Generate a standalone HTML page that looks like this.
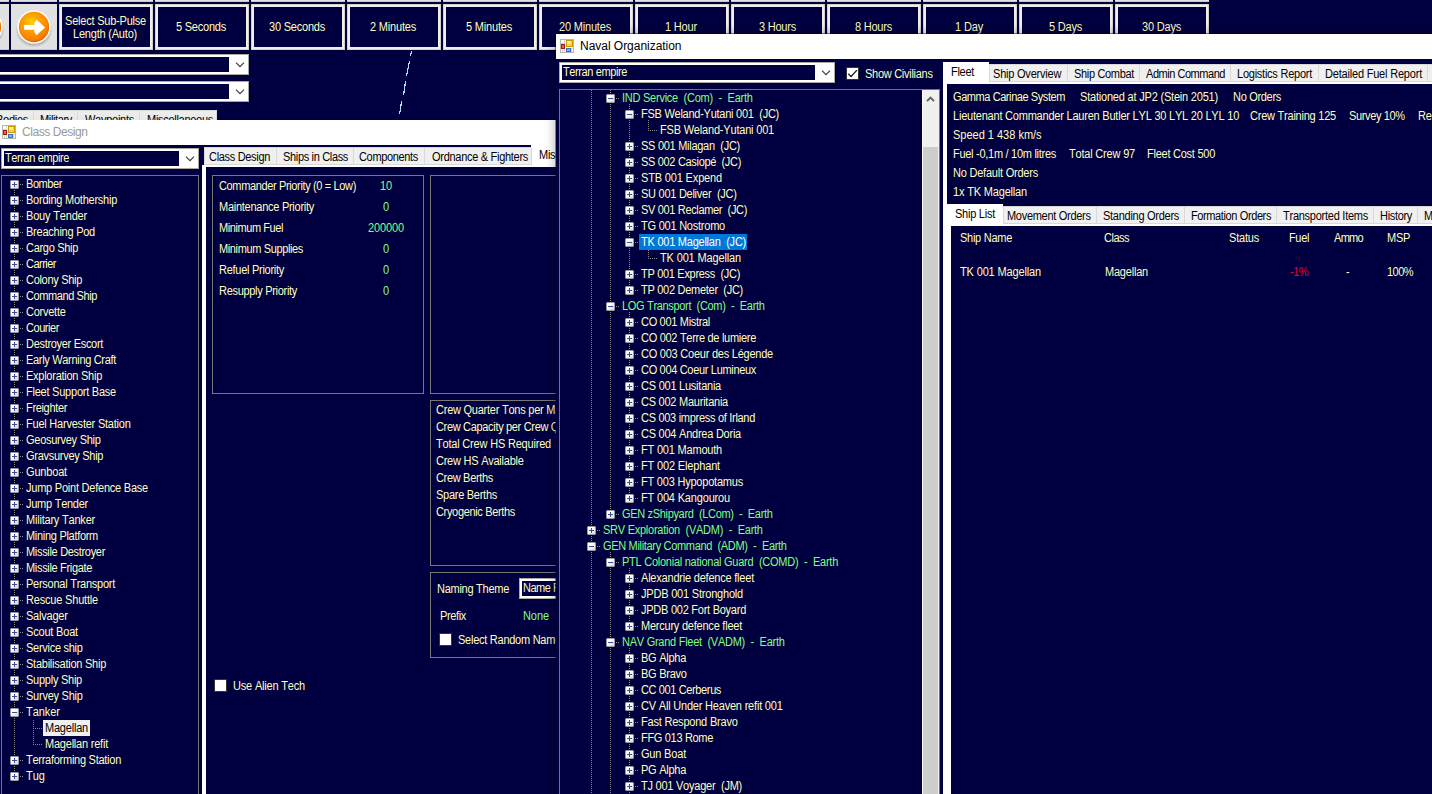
<!DOCTYPE html>
<html lang="en"><head><meta charset="utf-8"><title>Aurora</title><style>
html,body{margin:0;padding:0}
body{width:1432px;height:794px;overflow:hidden;background:#000040;position:relative;font-family:"Liberation Sans",sans-serif;font-size:12px;font-kerning:none}
div,svg.abs,span.t{position:absolute;box-sizing:border-box}
.t{white-space:pre;line-height:16px;height:16px;transform:scaleX(.9167);transform-origin:0 0}
.ttl{transform:none}
.win{overflow:hidden;background:#000040}
.nav{border-left:1px solid rgba(0,0,0,.4);border-top:1px solid rgba(0,0,0,.4);background-clip:padding-box;box-shadow:0 0 10px rgba(0,0,0,.3)}
.gbtn{background:#E1E1E1;border-bottom:1px solid #c9c9c4}
.tbtn{border:3px solid #EFEFEA;outline:1px solid #D2D2CB;outline-offset:-1px;background:#000040}
.combo{background:#fff;border:1px solid #A9A9A0}
.tabstrip{background:#F0F0F0;border:1px solid #D9D9D9}
.mts{background:linear-gradient(#EDEDED,#E2E2E2)}
.tree{border:1px solid #747470}
.grp{border:1px solid #787874}
.eb{background:linear-gradient(135deg,#fff 30%,#D8D8D4);border:1px solid #9A9A9A;border-radius:1px}
.eb:before{content:"";position:absolute;left:1px;top:3px;width:5px;height:1px;background:#3A4BA0}
.eb.p:after{content:"";position:absolute;left:3px;top:1px;width:1px;height:5px;background:#3A4BA0}
.vd{background-image:linear-gradient(#8a8a8a 50%,transparent 50%);background-size:1px 2px}
.hd{background-image:linear-gradient(90deg,#8a8a8a 50%,transparent 50%);background-size:2px 1px}
.cb{background:#fff;border:1px solid #333}
</style></head>
<body>
<div class="gbtn" style="left:-40px;top:-44px;width:49px;height:46px;"></div>
<div class="gbtn" style="left:11px;top:-44px;width:46px;height:46px;"></div>
<div class="gbtn" style="left:59px;top:-44px;width:94px;height:46px;"></div>
<div class="gbtn" style="left:155px;top:-44px;width:94px;height:46px;"></div>
<div class="gbtn" style="left:251px;top:-44px;width:94px;height:46px;"></div>
<div class="gbtn" style="left:347px;top:-44px;width:94px;height:46px;"></div>
<div class="gbtn" style="left:443px;top:-44px;width:94px;height:46px;"></div>
<div class="gbtn" style="left:539px;top:-44px;width:94px;height:46px;"></div>
<div class="gbtn" style="left:635px;top:-44px;width:94px;height:46px;"></div>
<div class="gbtn" style="left:731px;top:-44px;width:94px;height:46px;"></div>
<div class="gbtn" style="left:827px;top:-44px;width:94px;height:46px;"></div>
<div class="gbtn" style="left:923px;top:-44px;width:94px;height:46px;"></div>
<div class="gbtn" style="left:1019px;top:-44px;width:94px;height:46px;"></div>
<div class="gbtn" style="left:1115px;top:-44px;width:94px;height:46px;"></div>
<div class="gbtn" style="left:-40px;top:4px;width:49px;height:46px;"></div>
<div class="gbtn" style="left:11px;top:4px;width:46px;height:46px;"></div>
<svg class="abs" style="left:11px;top:4px" width="46" height="46" viewBox="0 0 46 46" ><defs><radialGradient id="og" cx="0.42" cy="0.36" r="0.66"><stop offset="0" stop-color="#FFD400"/><stop offset="0.4" stop-color="#FFA200"/><stop offset="0.85" stop-color="#F77F00"/><stop offset="1" stop-color="#E36400"/></radialGradient><radialGradient id="sh" cx="0.5" cy="0.5" r="0.5"><stop offset="0.75" stop-color="#000" stop-opacity="0.28"/><stop offset="1" stop-color="#000" stop-opacity="0"/></radialGradient></defs><ellipse cx="23" cy="26" rx="18.5" ry="17.5" fill="url(#sh)"/><circle cx="23" cy="23" r="16.7" fill="#fff"/><circle cx="23" cy="23" r="15.2" fill="url(#og)"/><path d="M13 21h10.4v-2.3l2-3.2 8.8 7.9-8.8 7.9-2-3.2v-2.3H13z" fill="#fff"/></svg>
<svg class="abs" style="left:-37px;top:4px" width="46" height="46" viewBox="0 0 46 46" ><ellipse cx="23" cy="26" rx="18.5" ry="17.5" fill="url(#sh)"/><circle cx="23" cy="23" r="16.7" fill="#fff"/><circle cx="23" cy="23" r="15.2" fill="url(#og)"/></svg>
<div class="tbtn" style="left:59px;top:4px;width:94px;height:46px;"></div>
<span class="t" style="left:64.5px;top:12.7px;color:#FFFFC0;letter-spacing:-0.231px;">Select Sub-Pulse</span>
<span class="t" style="left:73px;top:25.7px;color:#FFFFC0;letter-spacing:-0.223px;">Length (Auto)</span>
<div class="tbtn" style="left:155px;top:4px;width:94px;height:46px;"></div>
<span class="t" style="left:176px;top:18.7px;color:#FFFFC0;letter-spacing:-0.241px;">5 Seconds</span>
<div class="tbtn" style="left:251px;top:4px;width:94px;height:46px;"></div>
<span class="t" style="left:269px;top:18.7px;color:#FFFFC0;letter-spacing:-0.230px;">30 Seconds</span>
<div class="tbtn" style="left:347px;top:4px;width:94px;height:46px;"></div>
<span class="t" style="left:370px;top:18.7px;color:#FFFFC0;letter-spacing:-0.205px;">2 Minutes</span>
<div class="tbtn" style="left:443px;top:4px;width:94px;height:46px;"></div>
<span class="t" style="left:466px;top:18.7px;color:#FFFFC0;letter-spacing:-0.205px;">5 Minutes</span>
<div class="tbtn" style="left:539px;top:4px;width:94px;height:46px;"></div>
<span class="t" style="left:559px;top:18.7px;color:#FFFFC0;letter-spacing:-0.198px;">20 Minutes</span>
<div class="tbtn" style="left:635px;top:4px;width:94px;height:46px;"></div>
<span class="t" style="left:665px;top:18.7px;color:#FFFFC0;letter-spacing:-0.187px;">1 Hour</span>
<div class="tbtn" style="left:731px;top:4px;width:94px;height:46px;"></div>
<span class="t" style="left:758.5px;top:18.7px;color:#FFFFC0;letter-spacing:-0.238px;">3 Hours</span>
<div class="tbtn" style="left:827px;top:4px;width:94px;height:46px;"></div>
<span class="t" style="left:854.5px;top:18.7px;color:#FFFFC0;letter-spacing:-0.238px;">8 Hours</span>
<div class="tbtn" style="left:923px;top:4px;width:94px;height:46px;"></div>
<span class="t" style="left:955px;top:18.7px;color:#FFFFC0;letter-spacing:-0.163px;">1 Day</span>
<div class="tbtn" style="left:1019px;top:4px;width:94px;height:46px;"></div>
<span class="t" style="left:1048.5px;top:18.7px;color:#FFFFC0;letter-spacing:-0.227px;">5 Days</span>
<div class="tbtn" style="left:1115px;top:4px;width:94px;height:46px;"></div>
<span class="t" style="left:1141.5px;top:18.7px;color:#FFFFC0;letter-spacing:-0.212px;">30 Days</span>
<div class="combo" style="left:-60px;top:54px;width:309px;height:21px;"></div>
<div style="left:-57px;top:57px;width:286px;height:15px;background:#000040"></div>
<svg class="abs" style="left:235px;top:62.4px" width="10" height="6" viewBox="0 0 10 6" ><path d="M1 0.6L5 4.6L9 0.6" fill="none" stroke="#3c3c3c" stroke-width="1.15"/></svg>
<div class="combo" style="left:-60px;top:81px;width:309px;height:21px;"></div>
<div style="left:-57px;top:84px;width:286px;height:15px;background:#000040"></div>
<svg class="abs" style="left:235px;top:89.4px" width="10" height="6" viewBox="0 0 10 6" ><path d="M1 0.6L5 4.6L9 0.6" fill="none" stroke="#3c3c3c" stroke-width="1.15"/></svg>
<svg class="abs" style="left:395px;top:50px" width="20" height="68" viewBox="395 50 20 68" shape-rendering="crispEdges"><g stroke="#B0DCF5" stroke-width="1.2" fill="none"><path d="M411.6 51L410.4 55.6"/><path d="M409.6 61L406.6 75.8"/><path d="M405.6 81.2L403.6 94.8"/><path d="M401.6 101L399.6 114.5"/></g></svg>
<div class="tabstrip mts" style="left:-30px;top:110px;width:247px;height:22px;"></div>
<div style="left:33px;top:111px;width:1px;height:20px;background:#D9D9D9"></div>
<div style="left:77px;top:111px;width:1px;height:20px;background:#D9D9D9"></div>
<div style="left:139px;top:111px;width:1px;height:20px;background:#D9D9D9"></div>
<span class="t" style="left:-4px;top:111.7px;color:#000;letter-spacing:-0.299px;">Bodies</span>
<span class="t" style="left:40.4px;top:111.7px;color:#000;letter-spacing:-0.386px;">Military</span>
<span class="t" style="left:84.5px;top:111.7px;color:#000;letter-spacing:-0.286px;">Waypoints</span>
<span class="t" style="left:146.5px;top:111.7px;color:#000;letter-spacing:-0.311px;">Miscellaneous</span>
<div class="win" style="left:0;top:120px;width:556px;height:674px">
<div style="left:0px;top:0px;width:556px;height:25px;background:#fff"></div>
<svg class="abs" style="left:2px;top:5px" width="14" height="14" viewBox="0 0 14 14" ><rect x="0.5" y="0.5" width="13" height="13" fill="#fff" stroke="#b4b4b4"/><path d="M4.5 1v12M2.5 10v3M11.5 9v4M1 9.5h3.5M1 4.5h3.5M11 9.5h2" stroke="#d4d4d4" fill="none"/><rect x="1" y="5" width="4" height="5" fill="#a81c10"/><rect x="2" y="6" width="2" height="3" fill="#e0604f"/><rect x="6" y="1" width="7" height="7" fill="#c89a00"/><rect x="7" y="2" width="5" height="5" fill="#ffd23c"/><rect x="7" y="2" width="4" height="3" fill="#ffe88c"/><rect x="6" y="9" width="5" height="4" fill="#3a6fd0"/><rect x="7" y="10" width="3" height="2" fill="#7fb0f5"/></svg>
<span class="t ttl" style="left:22px;top:3.7px;color:#9a9a9a;letter-spacing:-0.434px;">Class Design</span>
<div class="combo" style="left:1px;top:28px;width:198px;height:21px;"></div>
<div style="left:4px;top:31px;width:175px;height:15px;background:#000040"></div>
<svg class="abs" style="left:185px;top:36.4px" width="10" height="6" viewBox="0 0 10 6" ><path d="M1 0.6L5 4.6L9 0.6" fill="none" stroke="#3c3c3c" stroke-width="1.15"/></svg>
<span class="t" style="left:5.2px;top:29.7px;color:#FFFFC0;letter-spacing:-0.426px;">Terran empire</span>
<div class="tree" style="left:1px;top:55px;width:198px;height:640px;"></div>
<div class="vd" style="left:14px;top:69px;width:1px;height:583px;background-position:0 1px"></div>
<div style="left:20px;top:64px;width:1px;height:1px;background:#8a8a8a"></div>
<div style="left:22px;top:64px;width:1px;height:1px;background:#8a8a8a"></div>
<div class="eb p" style="left:10px;top:60px;width:9px;height:9px;"></div>
<span class="t" style="left:26px;top:55.7px;color:#FFFFC0;letter-spacing:-0.460px;">Bomber</span>
<div style="left:20px;top:80px;width:1px;height:1px;background:#8a8a8a"></div>
<div style="left:22px;top:80px;width:1px;height:1px;background:#8a8a8a"></div>
<div class="eb p" style="left:10px;top:76px;width:9px;height:9px;"></div>
<span class="t" style="left:26px;top:71.7px;color:#FFFFC0;letter-spacing:-0.266px;">Bording Mothership</span>
<div style="left:20px;top:96px;width:1px;height:1px;background:#8a8a8a"></div>
<div style="left:22px;top:96px;width:1px;height:1px;background:#8a8a8a"></div>
<div class="eb p" style="left:10px;top:92px;width:9px;height:9px;"></div>
<span class="t" style="left:26px;top:87.7px;color:#FFFFC0;letter-spacing:-0.198px;">Bouy Tender</span>
<div style="left:20px;top:112px;width:1px;height:1px;background:#8a8a8a"></div>
<div style="left:22px;top:112px;width:1px;height:1px;background:#8a8a8a"></div>
<div class="eb p" style="left:10px;top:108px;width:9px;height:9px;"></div>
<span class="t" style="left:26px;top:103.7px;color:#FFFFC0;letter-spacing:-0.266px;">Breaching Pod</span>
<div style="left:20px;top:128px;width:1px;height:1px;background:#8a8a8a"></div>
<div style="left:22px;top:128px;width:1px;height:1px;background:#8a8a8a"></div>
<div class="eb p" style="left:10px;top:124px;width:9px;height:9px;"></div>
<span class="t" style="left:26px;top:119.7px;color:#FFFFC0;letter-spacing:-0.332px;">Cargo Ship</span>
<div style="left:20px;top:144px;width:1px;height:1px;background:#8a8a8a"></div>
<div style="left:22px;top:144px;width:1px;height:1px;background:#8a8a8a"></div>
<div class="eb p" style="left:10px;top:140px;width:9px;height:9px;"></div>
<span class="t" style="left:26px;top:135.7px;color:#FFFFC0;letter-spacing:-0.564px;">Carrier</span>
<div style="left:20px;top:160px;width:1px;height:1px;background:#8a8a8a"></div>
<div style="left:22px;top:160px;width:1px;height:1px;background:#8a8a8a"></div>
<div class="eb p" style="left:10px;top:156px;width:9px;height:9px;"></div>
<span class="t" style="left:26px;top:151.7px;color:#FFFFC0;letter-spacing:-0.330px;">Colony Ship</span>
<div style="left:20px;top:176px;width:1px;height:1px;background:#8a8a8a"></div>
<div style="left:22px;top:176px;width:1px;height:1px;background:#8a8a8a"></div>
<div class="eb p" style="left:10px;top:172px;width:9px;height:9px;"></div>
<span class="t" style="left:26px;top:167.7px;color:#FFFFC0;letter-spacing:-0.439px;">Command Ship</span>
<div style="left:20px;top:192px;width:1px;height:1px;background:#8a8a8a"></div>
<div style="left:22px;top:192px;width:1px;height:1px;background:#8a8a8a"></div>
<div class="eb p" style="left:10px;top:188px;width:9px;height:9px;"></div>
<span class="t" style="left:26px;top:183.7px;color:#FFFFC0;letter-spacing:-0.270px;">Corvette</span>
<div style="left:20px;top:208px;width:1px;height:1px;background:#8a8a8a"></div>
<div style="left:22px;top:208px;width:1px;height:1px;background:#8a8a8a"></div>
<div class="eb p" style="left:10px;top:204px;width:9px;height:9px;"></div>
<span class="t" style="left:26px;top:199.7px;color:#FFFFC0;letter-spacing:-0.480px;">Courier</span>
<div style="left:20px;top:224px;width:1px;height:1px;background:#8a8a8a"></div>
<div style="left:22px;top:224px;width:1px;height:1px;background:#8a8a8a"></div>
<div class="eb p" style="left:10px;top:220px;width:9px;height:9px;"></div>
<span class="t" style="left:26px;top:215.7px;color:#FFFFC0;letter-spacing:-0.335px;">Destroyer Escort</span>
<div style="left:20px;top:240px;width:1px;height:1px;background:#8a8a8a"></div>
<div style="left:22px;top:240px;width:1px;height:1px;background:#8a8a8a"></div>
<div class="eb p" style="left:10px;top:236px;width:9px;height:9px;"></div>
<span class="t" style="left:26px;top:231.7px;color:#FFFFC0;letter-spacing:-0.343px;">Early Warning Craft</span>
<div style="left:20px;top:256px;width:1px;height:1px;background:#8a8a8a"></div>
<div style="left:22px;top:256px;width:1px;height:1px;background:#8a8a8a"></div>
<div class="eb p" style="left:10px;top:252px;width:9px;height:9px;"></div>
<span class="t" style="left:26px;top:247.7px;color:#FFFFC0;letter-spacing:-0.280px;">Exploration Ship</span>
<div style="left:20px;top:272px;width:1px;height:1px;background:#8a8a8a"></div>
<div style="left:22px;top:272px;width:1px;height:1px;background:#8a8a8a"></div>
<div class="eb p" style="left:10px;top:268px;width:9px;height:9px;"></div>
<span class="t" style="left:26px;top:263.7px;color:#FFFFC0;letter-spacing:-0.253px;">Fleet Support Base</span>
<div style="left:20px;top:288px;width:1px;height:1px;background:#8a8a8a"></div>
<div style="left:22px;top:288px;width:1px;height:1px;background:#8a8a8a"></div>
<div class="eb p" style="left:10px;top:284px;width:9px;height:9px;"></div>
<span class="t" style="left:26px;top:279.7px;color:#FFFFC0;letter-spacing:-0.367px;">Freighter</span>
<div style="left:20px;top:304px;width:1px;height:1px;background:#8a8a8a"></div>
<div style="left:22px;top:304px;width:1px;height:1px;background:#8a8a8a"></div>
<div class="eb p" style="left:10px;top:300px;width:9px;height:9px;"></div>
<span class="t" style="left:26px;top:295.7px;color:#FFFFC0;letter-spacing:-0.240px;">Fuel Harvester Station</span>
<div style="left:20px;top:320px;width:1px;height:1px;background:#8a8a8a"></div>
<div style="left:22px;top:320px;width:1px;height:1px;background:#8a8a8a"></div>
<div class="eb p" style="left:10px;top:316px;width:9px;height:9px;"></div>
<span class="t" style="left:26px;top:311.7px;color:#FFFFC0;letter-spacing:-0.286px;">Geosurvey Ship</span>
<div style="left:20px;top:336px;width:1px;height:1px;background:#8a8a8a"></div>
<div style="left:22px;top:336px;width:1px;height:1px;background:#8a8a8a"></div>
<div class="eb p" style="left:10px;top:332px;width:9px;height:9px;"></div>
<span class="t" style="left:26px;top:327.7px;color:#FFFFC0;letter-spacing:-0.299px;">Gravsurvey Ship</span>
<div style="left:20px;top:352px;width:1px;height:1px;background:#8a8a8a"></div>
<div style="left:22px;top:352px;width:1px;height:1px;background:#8a8a8a"></div>
<div class="eb p" style="left:10px;top:348px;width:9px;height:9px;"></div>
<span class="t" style="left:26px;top:343.7px;color:#FFFFC0;letter-spacing:-0.189px;">Gunboat</span>
<div style="left:20px;top:368px;width:1px;height:1px;background:#8a8a8a"></div>
<div style="left:22px;top:368px;width:1px;height:1px;background:#8a8a8a"></div>
<div class="eb p" style="left:10px;top:364px;width:9px;height:9px;"></div>
<span class="t" style="left:26px;top:359.7px;color:#FFFFC0;letter-spacing:-0.246px;">Jump Point Defence Base</span>
<div style="left:20px;top:384px;width:1px;height:1px;background:#8a8a8a"></div>
<div style="left:22px;top:384px;width:1px;height:1px;background:#8a8a8a"></div>
<div class="eb p" style="left:10px;top:380px;width:9px;height:9px;"></div>
<span class="t" style="left:26px;top:375.7px;color:#FFFFC0;letter-spacing:-0.279px;">Jump Tender</span>
<div style="left:20px;top:400px;width:1px;height:1px;background:#8a8a8a"></div>
<div style="left:22px;top:400px;width:1px;height:1px;background:#8a8a8a"></div>
<div class="eb p" style="left:10px;top:396px;width:9px;height:9px;"></div>
<span class="t" style="left:26px;top:391.7px;color:#FFFFC0;letter-spacing:-0.228px;">Military Tanker</span>
<div style="left:20px;top:416px;width:1px;height:1px;background:#8a8a8a"></div>
<div style="left:22px;top:416px;width:1px;height:1px;background:#8a8a8a"></div>
<div class="eb p" style="left:10px;top:412px;width:9px;height:9px;"></div>
<span class="t" style="left:26px;top:407.7px;color:#FFFFC0;letter-spacing:-0.322px;">Mining Platform</span>
<div style="left:20px;top:432px;width:1px;height:1px;background:#8a8a8a"></div>
<div style="left:22px;top:432px;width:1px;height:1px;background:#8a8a8a"></div>
<div class="eb p" style="left:10px;top:428px;width:9px;height:9px;"></div>
<span class="t" style="left:26px;top:423.7px;color:#FFFFC0;letter-spacing:-0.343px;">Missile Destroyer</span>
<div style="left:20px;top:448px;width:1px;height:1px;background:#8a8a8a"></div>
<div style="left:22px;top:448px;width:1px;height:1px;background:#8a8a8a"></div>
<div class="eb p" style="left:10px;top:444px;width:9px;height:9px;"></div>
<span class="t" style="left:26px;top:439.7px;color:#FFFFC0;letter-spacing:-0.357px;">Missile Frigate</span>
<div style="left:20px;top:464px;width:1px;height:1px;background:#8a8a8a"></div>
<div style="left:22px;top:464px;width:1px;height:1px;background:#8a8a8a"></div>
<div class="eb p" style="left:10px;top:460px;width:9px;height:9px;"></div>
<span class="t" style="left:26px;top:455.7px;color:#FFFFC0;letter-spacing:-0.275px;">Personal Transport</span>
<div style="left:20px;top:480px;width:1px;height:1px;background:#8a8a8a"></div>
<div style="left:22px;top:480px;width:1px;height:1px;background:#8a8a8a"></div>
<div class="eb p" style="left:10px;top:476px;width:9px;height:9px;"></div>
<span class="t" style="left:26px;top:471.7px;color:#FFFFC0;letter-spacing:-0.203px;">Rescue Shuttle</span>
<div style="left:20px;top:496px;width:1px;height:1px;background:#8a8a8a"></div>
<div style="left:22px;top:496px;width:1px;height:1px;background:#8a8a8a"></div>
<div class="eb p" style="left:10px;top:492px;width:9px;height:9px;"></div>
<span class="t" style="left:26px;top:487.7px;color:#FFFFC0;letter-spacing:-0.249px;">Salvager</span>
<div style="left:20px;top:512px;width:1px;height:1px;background:#8a8a8a"></div>
<div style="left:22px;top:512px;width:1px;height:1px;background:#8a8a8a"></div>
<div class="eb p" style="left:10px;top:508px;width:9px;height:9px;"></div>
<span class="t" style="left:26px;top:503.7px;color:#FFFFC0;letter-spacing:-0.199px;">Scout Boat</span>
<div style="left:20px;top:528px;width:1px;height:1px;background:#8a8a8a"></div>
<div style="left:22px;top:528px;width:1px;height:1px;background:#8a8a8a"></div>
<div class="eb p" style="left:10px;top:524px;width:9px;height:9px;"></div>
<span class="t" style="left:26px;top:519.7px;color:#FFFFC0;letter-spacing:-0.302px;">Service ship</span>
<div style="left:20px;top:544px;width:1px;height:1px;background:#8a8a8a"></div>
<div style="left:22px;top:544px;width:1px;height:1px;background:#8a8a8a"></div>
<div class="eb p" style="left:10px;top:540px;width:9px;height:9px;"></div>
<span class="t" style="left:26px;top:535.7px;color:#FFFFC0;letter-spacing:-0.266px;">Stabilisation Ship</span>
<div style="left:20px;top:560px;width:1px;height:1px;background:#8a8a8a"></div>
<div style="left:22px;top:560px;width:1px;height:1px;background:#8a8a8a"></div>
<div class="eb p" style="left:10px;top:556px;width:9px;height:9px;"></div>
<span class="t" style="left:26px;top:551.7px;color:#FFFFC0;letter-spacing:-0.269px;">Supply Ship</span>
<div style="left:20px;top:576px;width:1px;height:1px;background:#8a8a8a"></div>
<div style="left:22px;top:576px;width:1px;height:1px;background:#8a8a8a"></div>
<div class="eb p" style="left:10px;top:572px;width:9px;height:9px;"></div>
<span class="t" style="left:26px;top:567.7px;color:#FFFFC0;letter-spacing:-0.269px;">Survey Ship</span>
<div style="left:20px;top:592px;width:1px;height:1px;background:#8a8a8a"></div>
<div style="left:22px;top:592px;width:1px;height:1px;background:#8a8a8a"></div>
<div class="eb" style="left:10px;top:588px;width:9px;height:9px;"></div>
<span class="t" style="left:26px;top:583.7px;color:#FFFFC0;letter-spacing:-0.045px;">Tanker</span>
<div class="hd" style="left:33px;top:608px;width:9px;height:1px;"></div>
<div style="left:43px;top:600px;width:47px;height:16px;background:#F0F0F0"></div>
<span class="t" style="left:45px;top:599.7px;color:#000;letter-spacing:-0.224px;">Magellan</span>
<div class="hd" style="left:33px;top:624px;width:9px;height:1px;"></div>
<span class="t" style="left:45px;top:615.7px;color:#FFFFC0;letter-spacing:-0.237px;">Magellan refit</span>
<div style="left:20px;top:640px;width:1px;height:1px;background:#8a8a8a"></div>
<div style="left:22px;top:640px;width:1px;height:1px;background:#8a8a8a"></div>
<div class="eb p" style="left:10px;top:636px;width:9px;height:9px;"></div>
<span class="t" style="left:26px;top:631.7px;color:#FFFFC0;letter-spacing:-0.288px;">Terraforming Station</span>
<div style="left:20px;top:656px;width:1px;height:1px;background:#8a8a8a"></div>
<div style="left:22px;top:656px;width:1px;height:1px;background:#8a8a8a"></div>
<div class="eb p" style="left:10px;top:652px;width:9px;height:9px;"></div>
<span class="t" style="left:26px;top:647.7px;color:#FFFFC0;letter-spacing:0.013px;">Tug</span>
<div class="vd" style="left:33px;top:600px;width:1px;height:25px;background-position:0 0px"></div>
<div class="tabstrip" style="left:204px;top:27px;width:330px;height:18px;"></div>
<div style="left:202px;top:45px;width:360px;height:640px;background:#fff"></div>
<div style="left:206px;top:47px;width:360px;height:640px;background:#000040"></div>
<div style="left:531px;top:25px;width:30px;height:22px;background:#fff"></div>
<div style="left:276px;top:28px;width:1px;height:17px;background:#D9D9D9"></div>
<div style="left:353px;top:28px;width:1px;height:17px;background:#D9D9D9"></div>
<div style="left:424px;top:28px;width:1px;height:17px;background:#D9D9D9"></div>
<div style="left:531px;top:28px;width:1px;height:17px;background:#D9D9D9"></div>
<span class="t" style="left:209px;top:28.7px;color:#000;letter-spacing:-0.346px;">Class Design</span>
<span class="t" style="left:283px;top:28.7px;color:#000;letter-spacing:-0.366px;">Ships in Class</span>
<span class="t" style="left:359px;top:28.7px;color:#000;letter-spacing:-0.368px;">Components</span>
<span class="t" style="left:432px;top:28.7px;color:#000;letter-spacing:-0.315px;">Ordnance &amp; Fighters</span>
<span class="t" style="left:539px;top:26.7px;color:#000;letter-spacing:-0.311px;">Miscellaneous</span>
<div class="grp" style="left:212px;top:55px;width:212px;height:219px;"></div>
<div class="grp" style="left:430px;top:55px;width:200px;height:219px;"></div>
<div class="grp" style="left:430px;top:280px;width:200px;height:166px;"></div>
<div class="grp" style="left:430px;top:452px;width:200px;height:86px;"></div>
<span class="t" style="left:218.6px;top:57.7px;color:#FFFFC0;letter-spacing:-0.391px;">Commander Priority (0 = Low)</span>
<span class="t" style="left:380px;top:57.7px;color:#80FF80;letter-spacing:-0.134px;">10</span>
<span class="t" style="left:218.6px;top:78.7px;color:#FFFFC0;letter-spacing:-0.288px;">Maintenance Priority</span>
<span class="t" style="left:383px;top:78.7px;color:#80FF80;letter-spacing:-0.142px;">0</span>
<span class="t" style="left:218.6px;top:99.7px;color:#FFFFC0;letter-spacing:-0.462px;">Minimum Fuel</span>
<span class="t" style="left:368px;top:99.7px;color:#80FF80;letter-spacing:-0.129px;">200000</span>
<span class="t" style="left:218.6px;top:120.7px;color:#FFFFC0;letter-spacing:-0.401px;">Minimum Supplies</span>
<span class="t" style="left:383px;top:120.7px;color:#80FF80;letter-spacing:-0.142px;">0</span>
<span class="t" style="left:218.6px;top:141.7px;color:#FFFFC0;letter-spacing:-0.297px;">Refuel Priority</span>
<span class="t" style="left:383px;top:141.7px;color:#80FF80;letter-spacing:-0.142px;">0</span>
<span class="t" style="left:218.6px;top:162.7px;color:#FFFFC0;letter-spacing:-0.330px;">Resupply Priority</span>
<span class="t" style="left:383px;top:162.7px;color:#80FF80;letter-spacing:-0.142px;">0</span>
<span class="t" style="left:436px;top:281.7px;color:#FFFFC0;letter-spacing:-0.259px;">Crew Quarter Tons per Man</span>
<span class="t" style="left:436px;top:298.7px;color:#FFFFC0;letter-spacing:-0.354px;">Crew Capacity per Crew Quarters</span>
<span class="t" style="left:436px;top:315.7px;color:#FFFFC0;letter-spacing:-0.209px;">Total Crew HS Required</span>
<span class="t" style="left:436px;top:332.7px;color:#FFFFC0;letter-spacing:-0.264px;">Crew HS Available</span>
<span class="t" style="left:436px;top:349.7px;color:#FFFFC0;letter-spacing:-0.350px;">Crew Berths</span>
<span class="t" style="left:436px;top:366.7px;color:#FFFFC0;letter-spacing:-0.292px;">Spare Berths</span>
<span class="t" style="left:436px;top:383.7px;color:#FFFFC0;letter-spacing:-0.367px;">Cryogenic Berths</span>
<span class="t" style="left:436.5px;top:460.7px;color:#FFFFC0;letter-spacing:-0.290px;">Naming Theme</span>
<div class="combo" style="left:519px;top:458px;width:120px;height:21px;"></div>
<div style="left:522px;top:461px;width:97px;height:15px;background:#000040"></div>
<svg class="abs" style="left:625px;top:466.4px" width="10" height="6" viewBox="0 0 10 6" ><path d="M1 0.6L5 4.6L9 0.6" fill="none" stroke="#3c3c3c" stroke-width="1.15"/></svg>
<span class="t" style="left:523.2px;top:459.7px;color:#FFFFC0;letter-spacing:-0.522px;">Name First</span>
<span class="t" style="left:439.5px;top:487.7px;color:#FFFFC0;letter-spacing:-0.387px;">Prefix</span>
<span class="t" style="left:523px;top:487.7px;color:#80FF80;letter-spacing:-0.081px;">None</span>
<div class="cb" style="left:439px;top:513px;width:13px;height:13px;"></div>
<span class="t" style="left:457.5px;top:511.7px;color:#FFFFC0;letter-spacing:-0.279px;">Select Random Name</span>
<div class="cb" style="left:214px;top:559px;width:13px;height:13px;"></div>
<span class="t" style="left:233.2px;top:557.7px;color:#FFFFC0;letter-spacing:-0.202px;">Use Alien Tech</span>
</div>
<div class="win nav" style="left:555px;top:33px;width:900px;height:780px">
<div style="left:0px;top:0px;width:900px;height:25px;background:#fff"></div>
<svg class="abs" style="left:4px;top:5px" width="14" height="14" viewBox="0 0 14 14" ><rect x="0.5" y="0.5" width="13" height="13" fill="#fff" stroke="#b4b4b4"/><path d="M4.5 1v12M2.5 10v3M11.5 9v4M1 9.5h3.5M1 4.5h3.5M11 9.5h2" stroke="#d4d4d4" fill="none"/><rect x="1" y="5" width="4" height="5" fill="#a81c10"/><rect x="2" y="6" width="2" height="3" fill="#e0604f"/><rect x="6" y="1" width="7" height="7" fill="#c89a00"/><rect x="7" y="2" width="5" height="5" fill="#ffd23c"/><rect x="7" y="2" width="4" height="3" fill="#ffe88c"/><rect x="6" y="9" width="5" height="4" fill="#3a6fd0"/><rect x="7" y="10" width="3" height="2" fill="#7fb0f5"/></svg>
<span class="t ttl" style="left:24px;top:3.7px;color:#000;letter-spacing:-0.031px;">Naval Organization</span>
<div class="combo" style="left:3px;top:28px;width:276px;height:21px;"></div>
<div style="left:6px;top:31px;width:253px;height:15px;background:#000040"></div>
<svg class="abs" style="left:265px;top:36.4px" width="10" height="6" viewBox="0 0 10 6" ><path d="M1 0.6L5 4.6L9 0.6" fill="none" stroke="#3c3c3c" stroke-width="1.15"/></svg>
<span class="t" style="left:7.2px;top:29.7px;color:#FFFFC0;letter-spacing:-0.426px;">Terran empire</span>
<div class="cb" style="left:290px;top:33px;width:13px;height:13px;"></div>
<svg class="abs" style="left:290px;top:33px" width="13" height="13" viewBox="0 0 13 13" ><path d="M2.3 6.7L5.1 9.5L10.9 3.2" fill="none" stroke="#1a1a1a" stroke-width="1.25"/></svg>
<span class="t" style="left:309px;top:31.7px;color:#FFFFC0;letter-spacing:-0.306px;">Show Civilians</span>
<div class="tree" style="left:3px;top:55px;width:381px;height:720px;"></div>
<div style="left:366px;top:56px;width:17px;height:720px;background:#F0F0F0;border-left:1px solid #fff;box-sizing:border-box"></div>
<div style="left:367px;top:113px;width:15px;height:700px;background:#CDCDCD"></div>
<svg class="abs" style="left:370px;top:61px" width="9" height="8" viewBox="0 0 9 8" ><path d="M1 6.2L4.5 2.7L8 6.2" fill="none" stroke="#606060" stroke-width="1.9"/></svg>
<div class="vd" style="left:35px;top:56px;width:1px;height:704px;background-position:0 0px"></div>
<div class="vd" style="left:54px;top:56px;width:1px;height:420px;background-position:0 0px"></div>
<div class="vd" style="left:54px;top:517px;width:1px;height:243px;background-position:0 1px"></div>
<div class="vd" style="left:73px;top:69px;width:1px;height:183px;background-position:0 1px"></div>
<div class="vd" style="left:73px;top:277px;width:1px;height:183px;background-position:0 1px"></div>
<div class="vd" style="left:73px;top:533px;width:1px;height:55px;background-position:0 1px"></div>
<div class="vd" style="left:73px;top:613px;width:1px;height:147px;background-position:0 1px"></div>
<div class="vd" style="left:92px;top:85px;width:1px;height:12px;background-position:0 1px"></div>
<div class="vd" style="left:92px;top:216px;width:1px;height:9px;background-position:0 0px"></div>
<div style="left:60px;top:64px;width:1px;height:1px;background:#8a8a8a"></div>
<div style="left:62px;top:64px;width:1px;height:1px;background:#8a8a8a"></div>
<div class="eb" style="left:50px;top:60px;width:9px;height:9px;"></div>
<span class="t" style="left:65.9px;top:55.7px;color:#80FF80;letter-spacing:-0.270px;">IND Service  (Com)  -  Earth</span>
<div style="left:79px;top:80px;width:1px;height:1px;background:#8a8a8a"></div>
<div style="left:81px;top:80px;width:1px;height:1px;background:#8a8a8a"></div>
<div class="eb" style="left:69px;top:76px;width:9px;height:9px;"></div>
<span class="t" style="left:84.9px;top:71.7px;color:#FFFFC0;letter-spacing:-0.278px;">FSB Weland-Yutani 001  (JC)</span>
<div class="hd" style="left:92px;top:96px;width:9px;height:1px;"></div>
<span class="t" style="left:103.9px;top:87.7px;color:#FFFFC0;letter-spacing:-0.209px;">FSB Weland-Yutani 001</span>
<div style="left:79px;top:112px;width:1px;height:1px;background:#8a8a8a"></div>
<div style="left:81px;top:112px;width:1px;height:1px;background:#8a8a8a"></div>
<div class="eb p" style="left:69px;top:108px;width:9px;height:9px;"></div>
<span class="t" style="left:84.9px;top:103.7px;color:#FFFFC0;letter-spacing:-0.302px;">SS 001 Milagan  (JC)</span>
<div style="left:79px;top:128px;width:1px;height:1px;background:#8a8a8a"></div>
<div style="left:81px;top:128px;width:1px;height:1px;background:#8a8a8a"></div>
<div class="eb p" style="left:69px;top:124px;width:9px;height:9px;"></div>
<span class="t" style="left:84.9px;top:119.7px;color:#FFFFC0;letter-spacing:-0.349px;">SS 002 Casiopé  (JC)</span>
<div style="left:79px;top:144px;width:1px;height:1px;background:#8a8a8a"></div>
<div style="left:81px;top:144px;width:1px;height:1px;background:#8a8a8a"></div>
<div class="eb p" style="left:69px;top:140px;width:9px;height:9px;"></div>
<span class="t" style="left:84.9px;top:135.7px;color:#FFFFC0;letter-spacing:-0.169px;">STB 001 Expend</span>
<div style="left:79px;top:160px;width:1px;height:1px;background:#8a8a8a"></div>
<div style="left:81px;top:160px;width:1px;height:1px;background:#8a8a8a"></div>
<div class="eb p" style="left:69px;top:156px;width:9px;height:9px;"></div>
<span class="t" style="left:84.9px;top:151.7px;color:#FFFFC0;letter-spacing:-0.287px;">SU 001 Deliver  (JC)</span>
<div style="left:79px;top:176px;width:1px;height:1px;background:#8a8a8a"></div>
<div style="left:81px;top:176px;width:1px;height:1px;background:#8a8a8a"></div>
<div class="eb p" style="left:69px;top:172px;width:9px;height:9px;"></div>
<span class="t" style="left:84.9px;top:167.7px;color:#FFFFC0;letter-spacing:-0.369px;">SV 001 Reclamer  (JC)</span>
<div style="left:79px;top:192px;width:1px;height:1px;background:#8a8a8a"></div>
<div style="left:81px;top:192px;width:1px;height:1px;background:#8a8a8a"></div>
<div class="eb p" style="left:69px;top:188px;width:9px;height:9px;"></div>
<span class="t" style="left:84.9px;top:183.7px;color:#FFFFC0;letter-spacing:-0.249px;">TG 001 Nostromo</span>
<div style="left:79px;top:208px;width:1px;height:1px;background:#8a8a8a"></div>
<div style="left:81px;top:208px;width:1px;height:1px;background:#8a8a8a"></div>
<div class="eb" style="left:69px;top:204px;width:9px;height:9px;"></div>
<div style="left:83px;top:200px;width:108px;height:16px;background:#0078D7"></div>
<span class="t" style="left:84.9px;top:199.7px;color:#fff;letter-spacing:-0.262px;">TK 001 Magellan  (JC)</span>
<div class="hd" style="left:92px;top:224px;width:9px;height:1px;"></div>
<span class="t" style="left:103.9px;top:215.7px;color:#FFFFC0;letter-spacing:-0.158px;">TK 001 Magellan</span>
<div style="left:79px;top:240px;width:1px;height:1px;background:#8a8a8a"></div>
<div style="left:81px;top:240px;width:1px;height:1px;background:#8a8a8a"></div>
<div class="eb p" style="left:69px;top:236px;width:9px;height:9px;"></div>
<span class="t" style="left:84.9px;top:231.7px;color:#FFFFC0;letter-spacing:-0.335px;">TP 001 Express  (JC)</span>
<div style="left:79px;top:256px;width:1px;height:1px;background:#8a8a8a"></div>
<div style="left:81px;top:256px;width:1px;height:1px;background:#8a8a8a"></div>
<div class="eb p" style="left:69px;top:252px;width:9px;height:9px;"></div>
<span class="t" style="left:84.9px;top:247.7px;color:#FFFFC0;letter-spacing:-0.305px;">TP 002 Demeter  (JC)</span>
<div style="left:60px;top:272px;width:1px;height:1px;background:#8a8a8a"></div>
<div style="left:62px;top:272px;width:1px;height:1px;background:#8a8a8a"></div>
<div class="eb" style="left:50px;top:268px;width:9px;height:9px;"></div>
<span class="t" style="left:65.9px;top:263.7px;color:#80FF80;letter-spacing:-0.353px;">LOG Transport  (Com)  -  Earth</span>
<div style="left:79px;top:288px;width:1px;height:1px;background:#8a8a8a"></div>
<div style="left:81px;top:288px;width:1px;height:1px;background:#8a8a8a"></div>
<div class="eb p" style="left:69px;top:284px;width:9px;height:9px;"></div>
<span class="t" style="left:84.9px;top:279.7px;color:#FFFFC0;letter-spacing:-0.340px;">CO 001 Mistral</span>
<div style="left:79px;top:304px;width:1px;height:1px;background:#8a8a8a"></div>
<div style="left:81px;top:304px;width:1px;height:1px;background:#8a8a8a"></div>
<div class="eb p" style="left:69px;top:300px;width:9px;height:9px;"></div>
<span class="t" style="left:84.9px;top:295.7px;color:#FFFFC0;letter-spacing:-0.317px;">CO 002 Terre de lumiere</span>
<div style="left:79px;top:320px;width:1px;height:1px;background:#8a8a8a"></div>
<div style="left:81px;top:320px;width:1px;height:1px;background:#8a8a8a"></div>
<div class="eb p" style="left:69px;top:316px;width:9px;height:9px;"></div>
<span class="t" style="left:84.9px;top:311.7px;color:#FFFFC0;letter-spacing:-0.255px;">CO 003 Coeur des Légende</span>
<div style="left:79px;top:336px;width:1px;height:1px;background:#8a8a8a"></div>
<div style="left:81px;top:336px;width:1px;height:1px;background:#8a8a8a"></div>
<div class="eb p" style="left:69px;top:332px;width:9px;height:9px;"></div>
<span class="t" style="left:84.9px;top:327.7px;color:#FFFFC0;letter-spacing:-0.347px;">CO 004 Coeur Lumineux</span>
<div style="left:79px;top:352px;width:1px;height:1px;background:#8a8a8a"></div>
<div style="left:81px;top:352px;width:1px;height:1px;background:#8a8a8a"></div>
<div class="eb p" style="left:69px;top:348px;width:9px;height:9px;"></div>
<span class="t" style="left:84.9px;top:343.7px;color:#FFFFC0;letter-spacing:-0.258px;">CS 001 Lusitania</span>
<div style="left:79px;top:368px;width:1px;height:1px;background:#8a8a8a"></div>
<div style="left:81px;top:368px;width:1px;height:1px;background:#8a8a8a"></div>
<div class="eb p" style="left:69px;top:364px;width:9px;height:9px;"></div>
<span class="t" style="left:84.9px;top:359.7px;color:#FFFFC0;letter-spacing:-0.264px;">CS 002 Mauritania</span>
<div style="left:79px;top:384px;width:1px;height:1px;background:#8a8a8a"></div>
<div style="left:81px;top:384px;width:1px;height:1px;background:#8a8a8a"></div>
<div class="eb p" style="left:69px;top:380px;width:9px;height:9px;"></div>
<span class="t" style="left:84.9px;top:375.7px;color:#FFFFC0;letter-spacing:-0.321px;">CS 003 impress of Irland</span>
<div style="left:79px;top:400px;width:1px;height:1px;background:#8a8a8a"></div>
<div style="left:81px;top:400px;width:1px;height:1px;background:#8a8a8a"></div>
<div class="eb p" style="left:69px;top:396px;width:9px;height:9px;"></div>
<span class="t" style="left:84.9px;top:391.7px;color:#FFFFC0;letter-spacing:-0.262px;">CS 004 Andrea Doria</span>
<div style="left:79px;top:416px;width:1px;height:1px;background:#8a8a8a"></div>
<div style="left:81px;top:416px;width:1px;height:1px;background:#8a8a8a"></div>
<div class="eb p" style="left:69px;top:412px;width:9px;height:9px;"></div>
<span class="t" style="left:84.9px;top:407.7px;color:#FFFFC0;letter-spacing:-0.215px;">FT 001 Mamouth</span>
<div style="left:79px;top:432px;width:1px;height:1px;background:#8a8a8a"></div>
<div style="left:81px;top:432px;width:1px;height:1px;background:#8a8a8a"></div>
<div class="eb p" style="left:69px;top:428px;width:9px;height:9px;"></div>
<span class="t" style="left:84.9px;top:423.7px;color:#FFFFC0;letter-spacing:-0.170px;">FT 002 Elephant</span>
<div style="left:79px;top:448px;width:1px;height:1px;background:#8a8a8a"></div>
<div style="left:81px;top:448px;width:1px;height:1px;background:#8a8a8a"></div>
<div class="eb p" style="left:69px;top:444px;width:9px;height:9px;"></div>
<span class="t" style="left:84.9px;top:439.7px;color:#FFFFC0;letter-spacing:-0.229px;">FT 003 Hypopotamus</span>
<div style="left:79px;top:464px;width:1px;height:1px;background:#8a8a8a"></div>
<div style="left:81px;top:464px;width:1px;height:1px;background:#8a8a8a"></div>
<div class="eb p" style="left:69px;top:460px;width:9px;height:9px;"></div>
<span class="t" style="left:84.9px;top:455.7px;color:#FFFFC0;letter-spacing:-0.187px;">FT 004 Kangourou</span>
<div style="left:60px;top:480px;width:1px;height:1px;background:#8a8a8a"></div>
<div style="left:62px;top:480px;width:1px;height:1px;background:#8a8a8a"></div>
<div class="eb p" style="left:50px;top:476px;width:9px;height:9px;"></div>
<span class="t" style="left:65.9px;top:471.7px;color:#80FF80;letter-spacing:-0.362px;">GEN zShipyard  (LCom)  -  Earth</span>
<div style="left:41px;top:496px;width:1px;height:1px;background:#8a8a8a"></div>
<div style="left:43px;top:496px;width:1px;height:1px;background:#8a8a8a"></div>
<div class="eb p" style="left:31px;top:492px;width:9px;height:9px;"></div>
<span class="t" style="left:46.9px;top:487.7px;color:#80FF80;letter-spacing:-0.278px;">SRV Exploration  (VADM)  -  Earth</span>
<div style="left:41px;top:512px;width:1px;height:1px;background:#8a8a8a"></div>
<div style="left:43px;top:512px;width:1px;height:1px;background:#8a8a8a"></div>
<div class="eb" style="left:31px;top:508px;width:9px;height:9px;"></div>
<span class="t" style="left:46.9px;top:503.7px;color:#80FF80;letter-spacing:-0.354px;">GEN Military Command  (ADM)  -  Earth</span>
<div style="left:60px;top:528px;width:1px;height:1px;background:#8a8a8a"></div>
<div style="left:62px;top:528px;width:1px;height:1px;background:#8a8a8a"></div>
<div class="eb" style="left:50px;top:524px;width:9px;height:9px;"></div>
<span class="t" style="left:65.9px;top:519.7px;color:#80FF80;letter-spacing:-0.277px;">PTL Colonial national Guard  (COMD)  -  Earth</span>
<div style="left:79px;top:544px;width:1px;height:1px;background:#8a8a8a"></div>
<div style="left:81px;top:544px;width:1px;height:1px;background:#8a8a8a"></div>
<div class="eb p" style="left:69px;top:540px;width:9px;height:9px;"></div>
<span class="t" style="left:84.9px;top:535.7px;color:#FFFFC0;letter-spacing:-0.229px;">Alexandrie defence fleet</span>
<div style="left:79px;top:560px;width:1px;height:1px;background:#8a8a8a"></div>
<div style="left:81px;top:560px;width:1px;height:1px;background:#8a8a8a"></div>
<div class="eb p" style="left:69px;top:556px;width:9px;height:9px;"></div>
<span class="t" style="left:84.9px;top:551.7px;color:#FFFFC0;letter-spacing:-0.218px;">JPDB 001 Stronghold</span>
<div style="left:79px;top:576px;width:1px;height:1px;background:#8a8a8a"></div>
<div style="left:81px;top:576px;width:1px;height:1px;background:#8a8a8a"></div>
<div class="eb p" style="left:69px;top:572px;width:9px;height:9px;"></div>
<span class="t" style="left:84.9px;top:567.7px;color:#FFFFC0;letter-spacing:-0.276px;">JPDB 002 Fort Boyard</span>
<div style="left:79px;top:592px;width:1px;height:1px;background:#8a8a8a"></div>
<div style="left:81px;top:592px;width:1px;height:1px;background:#8a8a8a"></div>
<div class="eb p" style="left:69px;top:588px;width:9px;height:9px;"></div>
<span class="t" style="left:84.9px;top:583.7px;color:#FFFFC0;letter-spacing:-0.248px;">Mercury defence fleet</span>
<div style="left:60px;top:608px;width:1px;height:1px;background:#8a8a8a"></div>
<div style="left:62px;top:608px;width:1px;height:1px;background:#8a8a8a"></div>
<div class="eb" style="left:50px;top:604px;width:9px;height:9px;"></div>
<span class="t" style="left:65.9px;top:599.7px;color:#80FF80;letter-spacing:-0.283px;">NAV Grand Fleet  (VADM)  -  Earth</span>
<div style="left:79px;top:624px;width:1px;height:1px;background:#8a8a8a"></div>
<div style="left:81px;top:624px;width:1px;height:1px;background:#8a8a8a"></div>
<div class="eb p" style="left:69px;top:620px;width:9px;height:9px;"></div>
<span class="t" style="left:84.9px;top:615.7px;color:#FFFFC0;letter-spacing:-0.286px;">BG Alpha</span>
<div style="left:79px;top:640px;width:1px;height:1px;background:#8a8a8a"></div>
<div style="left:81px;top:640px;width:1px;height:1px;background:#8a8a8a"></div>
<div class="eb p" style="left:69px;top:636px;width:9px;height:9px;"></div>
<span class="t" style="left:84.9px;top:631.7px;color:#FFFFC0;letter-spacing:-0.286px;">BG Bravo</span>
<div style="left:79px;top:656px;width:1px;height:1px;background:#8a8a8a"></div>
<div style="left:81px;top:656px;width:1px;height:1px;background:#8a8a8a"></div>
<div class="eb p" style="left:69px;top:652px;width:9px;height:9px;"></div>
<span class="t" style="left:84.9px;top:647.7px;color:#FFFFC0;letter-spacing:-0.407px;">CC 001 Cerberus</span>
<div style="left:79px;top:672px;width:1px;height:1px;background:#8a8a8a"></div>
<div style="left:81px;top:672px;width:1px;height:1px;background:#8a8a8a"></div>
<div class="eb p" style="left:69px;top:668px;width:9px;height:9px;"></div>
<span class="t" style="left:84.9px;top:663.7px;color:#FFFFC0;letter-spacing:-0.216px;">CV All Under Heaven refit 001</span>
<div style="left:79px;top:688px;width:1px;height:1px;background:#8a8a8a"></div>
<div style="left:81px;top:688px;width:1px;height:1px;background:#8a8a8a"></div>
<div class="eb p" style="left:69px;top:684px;width:9px;height:9px;"></div>
<span class="t" style="left:84.9px;top:679.7px;color:#FFFFC0;letter-spacing:-0.223px;">Fast Respond Bravo</span>
<div style="left:79px;top:704px;width:1px;height:1px;background:#8a8a8a"></div>
<div style="left:81px;top:704px;width:1px;height:1px;background:#8a8a8a"></div>
<div class="eb p" style="left:69px;top:700px;width:9px;height:9px;"></div>
<span class="t" style="left:84.9px;top:695.7px;color:#FFFFC0;letter-spacing:-0.346px;">FFG 013 Rome</span>
<div style="left:79px;top:720px;width:1px;height:1px;background:#8a8a8a"></div>
<div style="left:81px;top:720px;width:1px;height:1px;background:#8a8a8a"></div>
<div class="eb p" style="left:69px;top:716px;width:9px;height:9px;"></div>
<span class="t" style="left:84.9px;top:711.7px;color:#FFFFC0;letter-spacing:-0.202px;">Gun Boat</span>
<div style="left:79px;top:736px;width:1px;height:1px;background:#8a8a8a"></div>
<div style="left:81px;top:736px;width:1px;height:1px;background:#8a8a8a"></div>
<div class="eb p" style="left:69px;top:732px;width:9px;height:9px;"></div>
<span class="t" style="left:84.9px;top:727.7px;color:#FFFFC0;letter-spacing:-0.286px;">PG Alpha</span>
<div style="left:79px;top:752px;width:1px;height:1px;background:#8a8a8a"></div>
<div style="left:81px;top:752px;width:1px;height:1px;background:#8a8a8a"></div>
<div class="eb p" style="left:69px;top:748px;width:9px;height:9px;"></div>
<span class="t" style="left:84.9px;top:743.7px;color:#FFFFC0;letter-spacing:-0.260px;">TJ 001 Voyager  (JM)</span>
<div class="tabstrip" style="left:387px;top:30px;width:500px;height:18px;"></div>
<div style="left:387px;top:48px;width:500px;height:760px;background:#fff"></div>
<div style="left:391px;top:50px;width:500px;height:760px;background:#000040"></div>
<div style="left:387px;top:28px;width:46px;height:22px;background:#fff"></div>
<div style="left:433px;top:31px;width:1px;height:17px;background:#D9D9D9"></div>
<div style="left:511px;top:31px;width:1px;height:17px;background:#D9D9D9"></div>
<div style="left:583px;top:31px;width:1px;height:17px;background:#D9D9D9"></div>
<div style="left:674px;top:31px;width:1px;height:17px;background:#D9D9D9"></div>
<div style="left:762px;top:31px;width:1px;height:17px;background:#D9D9D9"></div>
<div style="left:871px;top:31px;width:1px;height:17px;background:#D9D9D9"></div>
<span class="t" style="left:395px;top:29.7px;color:#000;letter-spacing:-0.319px;">Fleet</span>
<span class="t" style="left:437px;top:31.7px;color:#000;letter-spacing:-0.229px;">Ship Overview</span>
<span class="t" style="left:518px;top:31.7px;color:#000;letter-spacing:-0.356px;">Ship Combat</span>
<span class="t" style="left:590px;top:31.7px;color:#000;letter-spacing:-0.502px;">Admin Command</span>
<span class="t" style="left:681px;top:31.7px;color:#000;letter-spacing:-0.264px;">Logistics Report</span>
<span class="t" style="left:769px;top:31.7px;color:#000;letter-spacing:-0.212px;">Detailed Fuel Report</span>
<span class="t" style="left:396.5px;top:54.7px;color:#FFFFC0;letter-spacing:-0.460px;">Gamma Carinae System</span>
<span class="t" style="left:524px;top:54.7px;color:#FFFFC0;letter-spacing:-0.215px;">Stationed at JP2 (Stein 2051)</span>
<span class="t" style="left:677px;top:54.7px;color:#FFFFC0;letter-spacing:-0.333px;">No Orders</span>
<span class="t" style="left:396.5px;top:73.7px;color:#FFFFC0;letter-spacing:-0.234px;">Lieutenant Commander Lauren Butler LYL 30 LYL 20 LYL 10</span>
<span class="t" style="left:694.3px;top:73.7px;color:#FFFFC0;letter-spacing:-0.249px;">Crew Training 125</span>
<span class="t" style="left:792.5px;top:73.7px;color:#FFFFC0;letter-spacing:-0.405px;">Survey 10%</span>
<span class="t" style="left:861.5px;top:73.7px;color:#FFFFC0;letter-spacing:-0.174px;">Ready</span>
<span class="t" style="left:396.5px;top:92.7px;color:#FFFFC0;letter-spacing:-0.005px;">Speed 1 438 km/s</span>
<span class="t" style="left:396.5px;top:111.7px;color:#FFFFC0;letter-spacing:-0.305px;">Fuel -0,1m / 10m litres</span>
<span class="t" style="left:513px;top:111.7px;color:#FFFFC0;letter-spacing:-0.208px;">Total Crew 97</span>
<span class="t" style="left:591px;top:111.7px;color:#FFFFC0;letter-spacing:-0.276px;">Fleet Cost 500</span>
<span class="t" style="left:396.5px;top:130.7px;color:#FFFFC0;letter-spacing:-0.234px;">No Default Orders</span>
<span class="t" style="left:396.5px;top:149.7px;color:#FFFFC0;letter-spacing:-0.189px;">1x TK Magellan</span>
<div class="tabstrip" style="left:391px;top:172px;width:500px;height:18px;"></div>
<div style="left:391px;top:190px;width:500px;height:600px;background:#fff"></div>
<div style="left:395px;top:192px;width:500px;height:600px;background:#000040"></div>
<div style="left:391px;top:170px;width:56px;height:22px;background:#fff"></div>
<div style="left:447px;top:173px;width:1px;height:17px;background:#D9D9D9"></div>
<div style="left:540px;top:173px;width:1px;height:17px;background:#D9D9D9"></div>
<div style="left:628px;top:173px;width:1px;height:17px;background:#D9D9D9"></div>
<div style="left:720px;top:173px;width:1px;height:17px;background:#D9D9D9"></div>
<div style="left:817px;top:173px;width:1px;height:17px;background:#D9D9D9"></div>
<div style="left:861px;top:173px;width:1px;height:17px;background:#D9D9D9"></div>
<span class="t" style="left:399px;top:171.7px;color:#000;letter-spacing:-0.266px;">Ship List</span>
<span class="t" style="left:451px;top:173.7px;color:#000;letter-spacing:-0.322px;">Movement Orders</span>
<span class="t" style="left:546.5px;top:173.7px;color:#000;letter-spacing:-0.299px;">Standing Orders</span>
<span class="t" style="left:635px;top:173.7px;color:#000;letter-spacing:-0.422px;">Formation Orders</span>
<span class="t" style="left:727px;top:173.7px;color:#000;letter-spacing:-0.273px;">Transported Items</span>
<span class="t" style="left:824px;top:173.7px;color:#000;letter-spacing:-0.348px;">History</span>
<span class="t" style="left:868px;top:173.7px;color:#000;letter-spacing:-0.311px;">Miscellaneous</span>
<span class="t" style="left:404px;top:195.7px;color:#FFFFC0;letter-spacing:-0.294px;">Ship Name</span>
<span class="t" style="left:548px;top:195.7px;color:#FFFFC0;letter-spacing:-0.549px;">Class</span>
<span class="t" style="left:673px;top:195.7px;color:#FFFFC0;letter-spacing:-0.217px;">Status</span>
<span class="t" style="left:733px;top:195.7px;color:#FFFFC0;letter-spacing:-0.381px;">Fuel</span>
<span class="t" style="left:777.5px;top:195.7px;color:#FFFFC0;letter-spacing:-0.759px;">Ammo</span>
<span class="t" style="left:831px;top:195.7px;color:#FFFFC0;letter-spacing:-0.308px;">MSP</span>
<span class="t" style="left:404px;top:229.7px;color:#FFFFC0;letter-spacing:-0.158px;">TK 001 Magellan</span>
<span class="t" style="left:548.5px;top:229.7px;color:#FFFFC0;letter-spacing:-0.224px;">Magellan</span>
<span class="t" style="left:734px;top:229.7px;color:#F0001E;letter-spacing:-0.569px;">-1%</span>
<span class="t" style="left:790px;top:229.7px;color:#FFFFC0;letter-spacing:0.364px;">-</span>
<span class="t" style="left:830.5px;top:229.7px;color:#FFFFC0;letter-spacing:-0.585px;">100%</span>
</div>
</body></html>
